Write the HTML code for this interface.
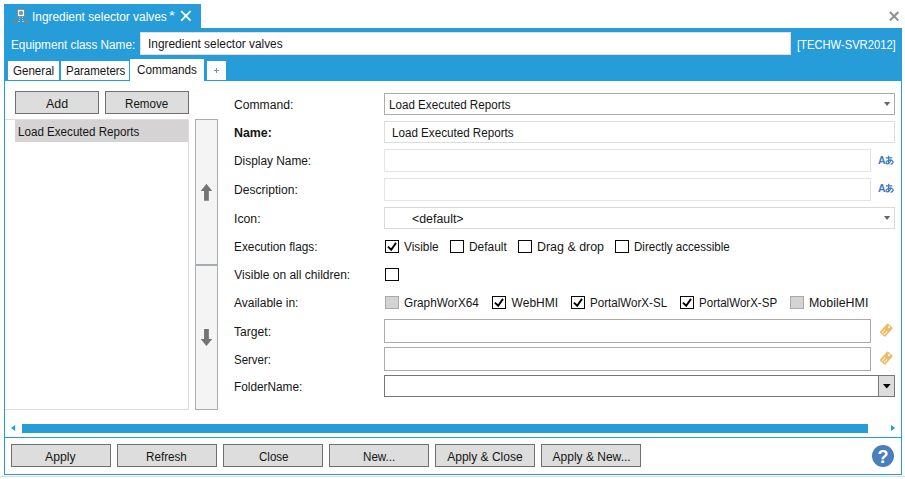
<!DOCTYPE html>
<html><head><meta charset="utf-8">
<style>
*{box-sizing:border-box;margin:0;padding:0}
html,body{width:905px;height:479px;overflow:hidden;background:#fff}
body{font-family:"Liberation Sans",sans-serif;font-size:12px;color:#151515;position:relative}
.a{position:absolute}
.b{background:#269dd9}
.t{position:absolute;white-space:nowrap;line-height:14px;font-size:12px;transform-origin:0 0;display:inline-block}
.btn{position:absolute;background:#dddddd;border:1px solid #707070;height:23px}
.inp{position:absolute;background:#fff;border:1px solid #e3e3ec}
.cb{position:absolute;width:14px;height:13px;border:1px solid #0a0a0a;background:#fff}
.cb.g{background:#d3d3d3;border-color:#a9a9a9}
.tab{position:absolute;background:#fff}
</style></head><body>
<!-- frame -->
<div class="a b" style="left:4px;top:4px;width:197px;height:25px"></div>
<div class="a b" style="left:4px;top:28px;width:898px;height:53px"></div>
<div class="a" style="left:4px;top:81px;width:898px;height:394px;border:1px solid #269dd9;border-top:none;background:#fff"></div>
<div class="a" style="left:0;top:476px;width:905px;height:1px;background:#dcdcdc"></div>
<!-- title tab icons -->
<svg class="a" style="left:13px;top:8px" width="16" height="16" viewBox="0 0 16 16" shape-rendering="auto"><rect x="4.5" y="1.4" width="7" height="7.1" fill="#fff" stroke="#8f7f76" stroke-width="0.9"/><circle cx="7.95" cy="4.9" r="2" fill="#3d7cc6"/><circle cx="7.95" cy="4.9" r="0.9" fill="#8fb4df"/><g fill="#dcc3a8"><rect x="6" y="8.9" width="1" height="0.9"/><rect x="9" y="8.9" width="1" height="0.9"/><rect x="6" y="11" width="1" height="0.9"/><rect x="9" y="11" width="1" height="0.9"/><rect x="5" y="13.1" width="2" height="0.9"/><rect x="9" y="13.1" width="2" height="0.9"/></g><rect x="1.1" y="12.1" width="2.9" height="2.8" fill="#8f7f76"/><rect x="12.1" y="12.1" width="2.9" height="2.8" fill="#8f7f76"/></svg>
<svg class="a" style="left:180px;top:10px" width="12" height="12" viewBox="0 0 12 12"><path d="M1.2 1.2 L10.6 10.6 M10.6 1.2 L1.2 10.6" stroke="#fff" stroke-width="1.7" fill="none"/></svg>
<svg class="a" style="left:889px;top:10.8px" width="10" height="10" viewBox="0 0 10 10"><path d="M0.9 1.1 L9.3 9.5 M9.3 1.1 L0.9 9.5" stroke="#939393" stroke-width="2.1" fill="none"/></svg>
<!-- header input -->
<div class="a" style="left:140px;top:32px;width:651px;height:23px;background:#fff;border:1px solid #eadcd6"></div>
<!-- tabs -->
<div class="tab" style="left:8px;top:61px;width:51px;height:19px"></div>
<div class="tab" style="left:61px;top:61px;width:68px;height:19px"></div>
<div class="tab" style="left:130px;top:59px;width:74px;height:23px"></div>
<div class="tab" style="left:207px;top:61px;width:19px;height:19px"></div>
<svg class="a" style="left:213px;top:67px" width="7" height="7"><path d="M3.5 1V6M1 3.5H6" stroke="#6f9f8c" stroke-width="1" fill="none"/></svg>
<!-- left panel -->
<div class="btn" style="left:15px;top:91px;width:84px"></div>
<div class="btn" style="left:105px;top:91px;width:84px"></div>
<div class="a" style="left:5px;top:119px;width:184px;height:291px;border:1px solid #dedede;border-left:none;background:#fff"></div>
<div class="a" style="left:15px;top:120px;width:173px;height:22px;background:#d5d3d4"></div>
<div class="a" style="left:195px;top:119px;width:23px;height:146px;background:#f4f4f4;border:1px solid #a7acb1"></div>
<div class="a" style="left:195px;top:265px;width:23px;height:145px;background:#f4f4f4;border:1px solid #a7acb1"></div>
<svg class="a" style="left:200px;top:184px" width="13" height="17" viewBox="0 0 13 17"><path d="M6.45 -0.2 L12.2 6.9 L8.85 6.9 L8.85 16.7 L4.05 16.7 L4.05 6.9 L0.7 6.9 Z" fill="#747474"/></svg>
<svg class="a" style="left:200px;top:329px" width="13" height="17" viewBox="0 0 13 17"><path d="M6.45 17 L12.2 9.9 L8.85 9.9 L8.85 -0.1 L4.05 -0.1 L4.05 9.9 L0.7 9.9 Z" fill="#747474"/></svg>
<!-- form fields -->
<div class="inp" style="left:384px;top:93px;width:511px;height:22px;border-color:#acacac"></div>
<svg class="a" style="left:884px;top:102px" width="7" height="4"><path d="M0 0 L6.2 0 L3.1 4 Z" fill="#666"/></svg>
<div class="inp" style="left:384px;top:121px;width:511px;height:22px;border-color:#dcdcdc"></div>
<div class="inp" style="left:384px;top:149px;width:487px;height:23px"></div>
<div class="inp" style="left:384px;top:178px;width:487px;height:23px"></div>
<div class="inp" style="left:384px;top:207px;width:511px;height:22px;border-color:#d9d9d9"></div>
<svg class="a" style="left:884px;top:216px" width="7" height="4"><path d="M0 0 L6.2 0 L3.1 4 Z" fill="#666"/></svg>
<!-- Aあ icons -->
<svg class="a" style="left:877px;top:155px" width="19" height="11" viewBox="0 0 19 11"><text x="1" y="9" font-family="Liberation Sans" font-weight="bold" font-size="10.5" fill="#3f7ac2">A</text><g stroke="#3f7ac2" stroke-width="1.25" fill="none" transform="translate(-1.2 -0.3)"><path d="M10 3.2H16.5M12.8 1V9.5"/><path d="M15.3 4.6C15 7.5 12.5 9.6 10.8 8.9C9.6 8.3 10.4 6.2 13 5.6C15.4 5.1 17.3 6 17.3 7.4C17.3 8.7 16 9.4 14.8 9.6"/></g></svg>
<svg class="a" style="left:877px;top:183px" width="19" height="11" viewBox="0 0 19 11"><text x="1" y="9" font-family="Liberation Sans" font-weight="bold" font-size="10.5" fill="#3f7ac2">A</text><g stroke="#3f7ac2" stroke-width="1.25" fill="none" transform="translate(-1.2 -0.3)"><path d="M10 3.2H16.5M12.8 1V9.5"/><path d="M15.3 4.6C15 7.5 12.5 9.6 10.8 8.9C9.6 8.3 10.4 6.2 13 5.6C15.4 5.1 17.3 6 17.3 7.4C17.3 8.7 16 9.4 14.8 9.6"/></g></svg>
<!-- checkboxes -->
<div class="cb" style="left:385px;top:240px"></div>
<div class="cb" style="left:450px;top:240px"></div>
<div class="cb" style="left:518px;top:240px"></div>
<div class="cb" style="left:615px;top:240px"></div>
<div class="cb" style="left:385px;top:268px"></div>
<div class="cb g" style="left:385px;top:296px"></div>
<div class="cb" style="left:492px;top:296px"></div>
<div class="cb" style="left:571px;top:296px"></div>
<div class="cb" style="left:680px;top:296px"></div>
<div class="cb g" style="left:790px;top:296px"></div>
<svg class="a" style="left:385px;top:240px" width="14" height="13"><path d="M2.9 6.6 L6.2 9.7 L11 2.9" stroke="#000" stroke-width="1.9" fill="none"/></svg>
<svg class="a" style="left:492px;top:296px" width="14" height="13"><path d="M2.9 6.6 L6.2 9.7 L11 2.9" stroke="#000" stroke-width="1.9" fill="none"/></svg>
<svg class="a" style="left:571px;top:296px" width="14" height="13"><path d="M2.9 6.6 L6.2 9.7 L11 2.9" stroke="#000" stroke-width="1.9" fill="none"/></svg>
<svg class="a" style="left:680px;top:296px" width="14" height="13"><path d="M2.9 6.6 L6.2 9.7 L11 2.9" stroke="#000" stroke-width="1.9" fill="none"/></svg>
<!-- target/server/folder -->
<div class="inp" style="left:384px;top:319px;width:487px;height:24px;border-color:#aeaaa8"></div>
<div class="inp" style="left:384px;top:347px;width:487px;height:24px;border-color:#aeaaa8"></div>
<div class="inp" style="left:384px;top:375px;width:511px;height:22px;border-color:#767676"></div>
<div class="a" style="left:878px;top:376px;width:16px;height:20px;background:#dddddd;border-left:1px solid #787878"></div>
<svg class="a" style="left:883px;top:384px" width="8" height="5"><path d="M0 0 L7.6 0 L3.8 4.4 Z" fill="#000"/></svg>
<!-- tags -->
<svg class="a" style="left:878px;top:322px" width="17" height="17" viewBox="0 0 17 17"><g transform="translate(8.25 8.1) rotate(-48)"><rect x="-6.1" y="-3.65" width="12.2" height="7.3" rx="1.2" fill="#eabd63"/><circle cx="4.1" cy="0.1" r="1.05" fill="#fff"/><path d="M-4.8 -1.2H-0.4M-4.8 1.5H-0.2" stroke="#fff" stroke-width="1" stroke-dasharray="2 0.5"/></g></svg>
<svg class="a" style="left:878px;top:350px" width="17" height="17" viewBox="0 0 17 17"><g transform="translate(8.25 8.1) rotate(-48)"><rect x="-6.1" y="-3.65" width="12.2" height="7.3" rx="1.2" fill="#eabd63"/><circle cx="4.1" cy="0.1" r="1.05" fill="#fff"/><path d="M-4.8 -1.2H-0.4M-4.8 1.5H-0.2" stroke="#fff" stroke-width="1" stroke-dasharray="2 0.5"/></g></svg>
<!-- scrollbar -->
<div class="a b" style="left:22px;top:424px;width:846px;height:9px"></div>
<svg class="a" style="left:11px;top:425px" width="5" height="6"><path d="M4.2 0 L4.2 6 L0 3 Z" fill="#269dd9"/></svg>
<svg class="a" style="left:891px;top:425px" width="5" height="6"><path d="M0 0 L0 6 L4.2 3 Z" fill="#269dd9"/></svg>
<!-- bottom -->
<div class="a b" style="left:5px;top:437px;width:896px;height:1px"></div>
<div class="btn" style="left:11px;top:444px;width:100px"></div>
<div class="btn" style="left:117px;top:444px;width:100px"></div>
<div class="btn" style="left:223px;top:444px;width:100px"></div>
<div class="btn" style="left:329px;top:444px;width:100px"></div>
<div class="btn" style="left:435px;top:444px;width:100px"></div>
<div class="btn" style="left:541px;top:444px;width:100px"></div>
<svg class="a" style="left:872px;top:445px" width="22" height="22" viewBox="0 0 22 22"><circle cx="11" cy="11" r="11" fill="#4a7ebc"/><text x="11" y="17.9" font-family="Liberation Sans" font-weight="bold" font-size="18" fill="#fff" text-anchor="middle">?</text></svg>

<span class="t" style="left:31.78px;top:10.00px;color:#fff;font-weight:400;font-size:12px;transform:scaleX(0.9907)">Ingredient selector valves</span>
<span class="t" style="left:169.20px;top:9.00px;color:#fff;font-weight:400;font-size:12px;transform:scaleX(1.2534)">*</span>
<span class="t" style="left:10.60px;top:38.00px;color:#fff;font-weight:400;font-size:12px;transform:scaleX(0.9801)">Equipment class Name:</span>
<span class="t" style="left:147.86px;top:37.00px;color:#151515;font-weight:400;font-size:12px;transform:scaleX(0.9896)">Ingredient selector valves</span>
<span class="t" style="left:796.78px;top:38.00px;color:#fff;font-weight:400;font-size:12px;transform:scaleX(0.9331)">[TECHW-SVR2012]</span>
<span class="t" style="left:13.22px;top:64.00px;color:#151515;font-weight:400;font-size:12px;transform:scaleX(0.9638)">General</span>
<span class="t" style="left:65.66px;top:64.00px;color:#151515;font-weight:400;font-size:12px;transform:scaleX(0.9565)">Parameters</span>
<span class="t" style="left:136.87px;top:63.00px;color:#151515;font-weight:400;font-size:12px;transform:scaleX(0.9778)">Commands</span>
<span class="t" style="left:46.30px;top:97.00px;color:#151515;font-weight:400;font-size:12px;transform:scaleX(1.0335)">Add</span>
<span class="t" style="left:124.85px;top:97.00px;color:#151515;font-weight:400;font-size:12px;transform:scaleX(0.9681)">Remove</span>
<span class="t" style="left:17.76px;top:125.00px;color:#151515;font-weight:400;font-size:12px;transform:scaleX(0.9679)">Load Executed Reports</span>
<span class="t" style="left:234.01px;top:98.00px;color:#151515;font-weight:400;font-size:12px;transform:scaleX(1.0111)">Command:</span>
<span class="t" style="left:234.01px;top:126.00px;color:#151515;font-weight:700;font-size:12px;transform:scaleX(1.0323)">Name:</span>
<span class="t" style="left:233.96px;top:154.00px;color:#151515;font-weight:400;font-size:12px;transform:scaleX(0.9890)">Display Name:</span>
<span class="t" style="left:234.13px;top:183.00px;color:#151515;font-weight:400;font-size:12px;transform:scaleX(1.0060)">Description:</span>
<span class="t" style="left:234.11px;top:212.00px;color:#151515;font-weight:400;font-size:12px;transform:scaleX(1.0213)">Icon:</span>
<span class="t" style="left:234.08px;top:240.00px;color:#151515;font-weight:400;font-size:12px;transform:scaleX(0.9854)">Execution flags:</span>
<span class="t" style="left:234.30px;top:268.00px;color:#151515;font-weight:400;font-size:12px;transform:scaleX(1.0000)">Visible on all children:</span>
<span class="t" style="left:234.16px;top:296.00px;color:#151515;font-weight:400;font-size:12px;transform:scaleX(0.9986)">Available in:</span>
<span class="t" style="left:234.18px;top:325.00px;color:#151515;font-weight:400;font-size:12px;transform:scaleX(1.0100)">Target:</span>
<span class="t" style="left:233.57px;top:353.00px;color:#151515;font-weight:400;font-size:12px;transform:scaleX(0.9572)">Server:</span>
<span class="t" style="left:233.59px;top:380.00px;color:#151515;font-weight:400;font-size:12px;transform:scaleX(0.9852)">FolderName:</span>
<span class="t" style="left:388.52px;top:98.00px;color:#151515;font-weight:400;font-size:12px;transform:scaleX(0.9695)">Load Executed Reports</span>
<span class="t" style="left:391.52px;top:126.00px;color:#151515;font-weight:400;font-size:12px;transform:scaleX(0.9695)">Load Executed Reports</span>
<span class="t" style="left:411.73px;top:212.00px;color:#151515;font-weight:400;font-size:12px;transform:scaleX(1.0305)">&lt;default&gt;</span>
<span class="t" style="left:404.33px;top:240.00px;color:#151515;font-weight:400;font-size:12px;transform:scaleX(0.9860)">Visible</span>
<span class="t" style="left:469.29px;top:240.00px;color:#151515;font-weight:400;font-size:12px;transform:scaleX(0.9915)">Default</span>
<span class="t" style="left:536.52px;top:240.00px;color:#151515;font-weight:400;font-size:12px;transform:scaleX(1.0361)">Drag &amp; drop</span>
<span class="t" style="left:634.28px;top:240.00px;color:#151515;font-weight:400;font-size:12px;transform:scaleX(0.9635)">Directly accessible</span>
<span class="t" style="left:403.77px;top:296.00px;color:#151515;font-weight:400;font-size:12px;transform:scaleX(0.9793)">GraphWorX64</span>
<span class="t" style="left:511.60px;top:296.00px;color:#151515;font-weight:400;font-size:12px;transform:scaleX(1.0000)">WebHMI</span>
<span class="t" style="left:589.70px;top:296.00px;color:#151515;font-weight:400;font-size:12px;transform:scaleX(0.9663)">PortalWorX-SL</span>
<span class="t" style="left:698.99px;top:296.00px;color:#151515;font-weight:400;font-size:12px;transform:scaleX(0.9628)">PortalWorX-SP</span>
<span class="t" style="left:809.11px;top:296.00px;color:#151515;font-weight:400;font-size:12px;transform:scaleX(1.0349)">MobileHMI</span>
<span class="t" style="left:44.76px;top:450.00px;color:#151515;font-weight:400;font-size:12px;transform:scaleX(1.0218)">Apply</span>
<span class="t" style="left:146.27px;top:450.00px;color:#151515;font-weight:400;font-size:12px;transform:scaleX(0.9718)">Refresh</span>
<span class="t" style="left:258.95px;top:450.00px;color:#151515;font-weight:400;font-size:12px;transform:scaleX(0.9630)">Close</span>
<span class="t" style="left:363.27px;top:450.00px;color:#151515;font-weight:400;font-size:12px;transform:scaleX(0.9670)">New...</span>
<span class="t" style="left:447.22px;top:450.00px;color:#151515;font-weight:400;font-size:12px;transform:scaleX(1.0000)">Apply &amp; Close</span>
<span class="t" style="left:552.60px;top:450.00px;color:#151515;font-weight:400;font-size:12px;transform:scaleX(1.0000)">Apply &amp; New...</span>
</body></html>
